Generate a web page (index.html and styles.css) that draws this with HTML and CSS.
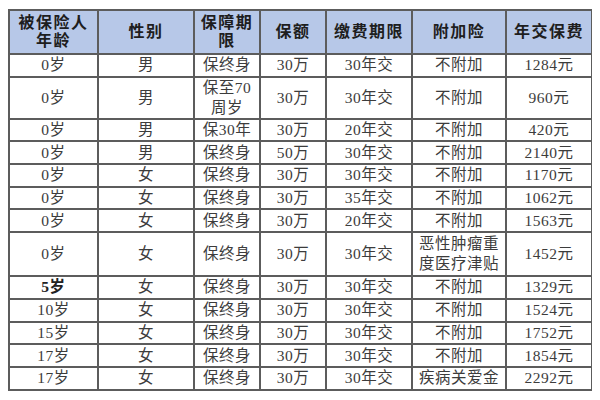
FILE: index.html
```html
<!DOCTYPE html>
<html lang="zh">
<head>
<meta charset="utf-8">
<link rel="stylesheet" href="styles.css">
</head>
<body>
<table class="plan">
  <colgroup>
    <col class="c1"><col class="c2"><col class="c3"><col class="c4"><col class="c5"><col class="c6"><col class="c7">
  </colgroup>
  <thead>
    <tr class="head">
      <th>被保险人<br>年龄</th><th>性别</th><th>保障期<br>限</th><th>保额</th><th>缴费期限</th><th>附加险</th><th>年交保费</th>
    </tr>
  </thead>
  <tbody>
    <tr><td>0岁</td><td>男</td><td>保终身</td><td>30万</td><td>30年交</td><td>不附加</td><td>1284元</td></tr>
    <tr class="double"><td>0岁</td><td>男</td><td>保至70<br>周岁</td><td>30万</td><td>30年交</td><td>不附加</td><td>960元</td></tr>
    <tr><td>0岁</td><td>男</td><td>保30年</td><td>30万</td><td>20年交</td><td>不附加</td><td>420元</td></tr>
    <tr><td>0岁</td><td>男</td><td>保终身</td><td>50万</td><td>30年交</td><td>不附加</td><td>2140元</td></tr>
    <tr><td>0岁</td><td>女</td><td>保终身</td><td>30万</td><td>30年交</td><td>不附加</td><td>1170元</td></tr>
    <tr><td>0岁</td><td>女</td><td>保终身</td><td>30万</td><td>35年交</td><td>不附加</td><td>1062元</td></tr>
    <tr><td>0岁</td><td>女</td><td>保终身</td><td>30万</td><td>20年交</td><td>不附加</td><td>1563元</td></tr>
    <tr class="double tall"><td>0岁</td><td>女</td><td>保终身</td><td>30万</td><td>30年交</td><td>恶性肿瘤重<br>度医疗津贴</td><td>1452元</td></tr>
    <tr><td class="strong">5岁</td><td>女</td><td>保终身</td><td>30万</td><td>30年交</td><td>不附加</td><td>1329元</td></tr>
    <tr><td>10岁</td><td>女</td><td>保终身</td><td>30万</td><td>30年交</td><td>不附加</td><td>1524元</td></tr>
    <tr><td>15岁</td><td>女</td><td>保终身</td><td>30万</td><td>30年交</td><td>不附加</td><td>1752元</td></tr>
    <tr><td>17岁</td><td>女</td><td>保终身</td><td>30万</td><td>30年交</td><td>不附加</td><td>1854元</td></tr>
    <tr><td>17岁</td><td>女</td><td>保终身</td><td>30万</td><td>30年交</td><td>疾病关爱金</td><td>2292元</td></tr>
  </tbody>
</table>
</body>
</html>
```

FILE: styles.css
```css
html, body {
  background: #ffffff;
}
body {
  margin: 9px 8px 8px 8px;
  font-family: "Liberation Serif", "Noto Sans CJK SC", serif;
  color: #3c3c3c;
}
.plan {
  border-collapse: collapse;
  table-layout: fixed;
  width: 583px;
}
.c1 { width: 89px; }
.c2 { width: 96px; }
.c3 { width: 66px; }
.c4 { width: 66px; }
.c5 { width: 86px; }
.c6 { width: 94px; }
.c7 { width: 86px; }

.plan th,
.plan td {
  border: 2px solid #5c5c5c;
  padding: 0;
  text-align: center;
  vertical-align: middle;
  white-space: nowrap;
}
.plan th {
  background: #b7c8e8;
  color: #1e1e1e;
  font-size: 16px;
  font-weight: bold;
  letter-spacing: 1.5px;
  line-height: 18px;
  height: 42px;
}
.plan td {
  font-size: 15.5px;
  letter-spacing: 0.5px;
  line-height: 20px;
  height: 20.7px;
}
.plan tr.double td {
  height: 40px;
}
.plan tr.tall td {
  height: 42px;
}
.plan td.strong {
  font-weight: bold;
  color: #222;
}
```
